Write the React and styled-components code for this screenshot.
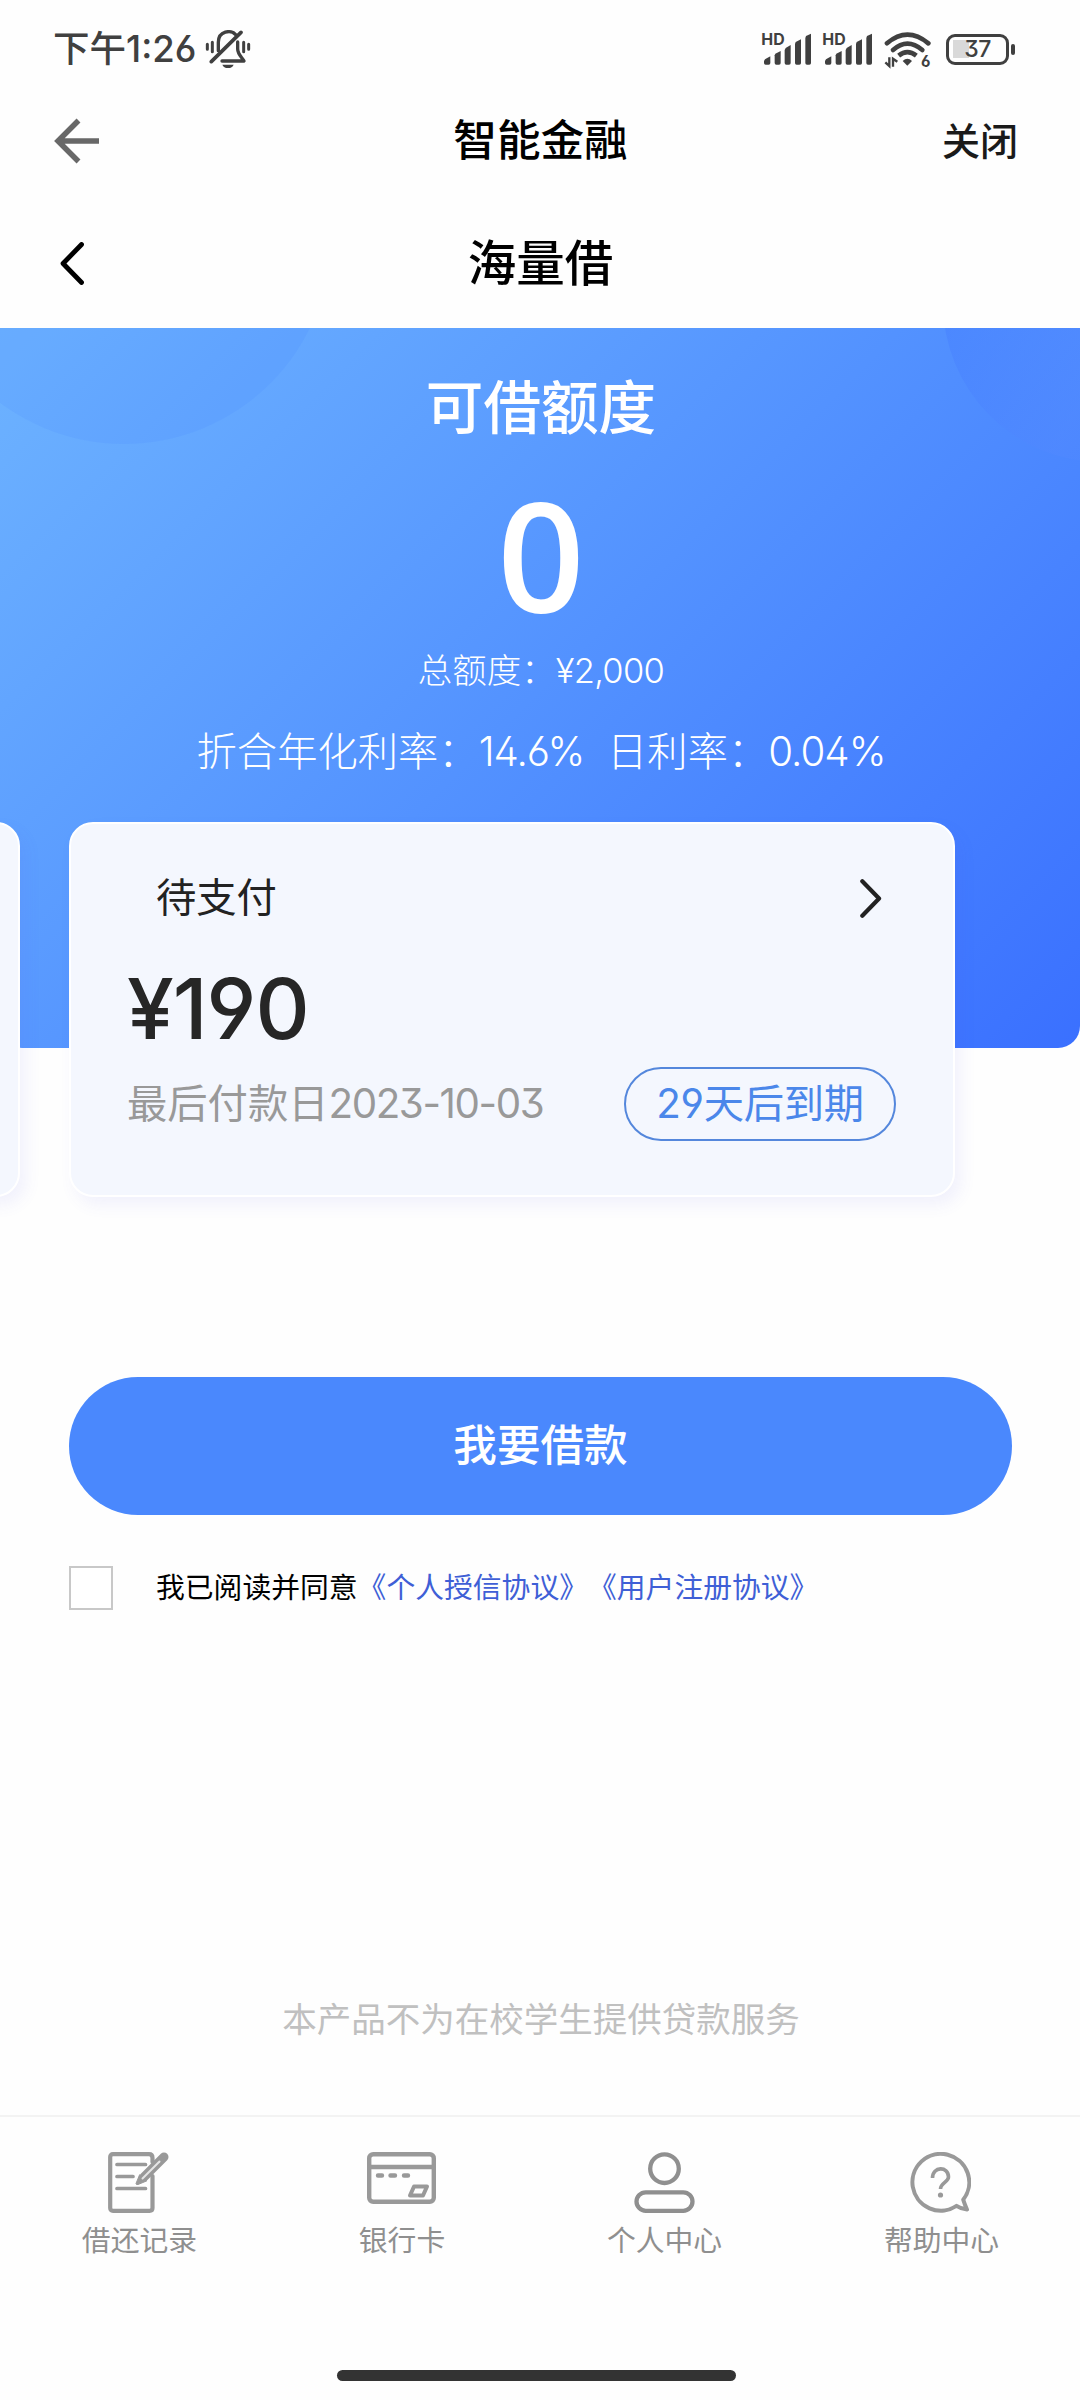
import React, { useState } from "react";
import styled, { createGlobalStyle } from "styled-components";

const GlobalStyle = createGlobalStyle`
  * {
    box-sizing: border-box;
  }
  body {
    margin: 0;
    background: #fff;
    font-family: Inter, "Noto Sans CJK SC", sans-serif;
    font-feature-settings: "ss01";
    text-spacing-trim: space-all;
    overflow-x: hidden;
  }
`;

const Page = styled.div`
  width: 1080px;
  height: 2400px;
  display: flex;
  flex-direction: column;
  overflow: hidden;
  background: #fefefe;
`;

const StatusBar = styled.div`
  height: 98px;
  display: flex;
  align-items: center;
  justify-content: space-between;
  padding: 0 65px 0 53px;
  color: #404040;
`;

const StatusGroup = styled.div`
  display: flex;
  align-items: center;
  gap: ${(props) => props.$gap || 0}px;
`;

const Clock = styled.span`
  font-size: 36.5px;
  line-height: 50px;
  font-weight: 500;
`;

const Battery = styled.div`
  position: relative;
  width: 63px;
  height: 31px;
  margin: 0 6px 0 4px;
  border: 3px solid #404040;
  border-radius: 9px;
  display: flex;
  align-items: center;
  justify-content: center;
  font-size: 23px;
  font-weight: 500;
  letter-spacing: -0.5px;
  background: linear-gradient(to right, #d9d9d9, #d9d9d9) 4px center / 16px 18px no-repeat;

  &:after {
    content: "";
    position: absolute;
    right: -9px;
    top: 7px;
    width: 4px;
    height: 11px;
    border-radius: 2px;
    background: #404040;
  }
`;

const AppHeader = styled.header`
  height: ${(props) => props.$height}px;
  display: grid;
  grid-template-columns: 200px 1fr 200px;
  align-items: center;
  padding: ${(props) => props.$top}px 62px 0 ${(props) => props.$left}px;
  color: #000;
`;

const AppTitle = styled.h1`
  margin: 0;
  padding-left: ${(props) => props.$nudge}px;
  text-align: center;
  font-weight: 500;
  font-size: ${(props) => props.$size}px;
  line-height: 60px;
`;

const CloseButton = styled.button`
  border: 0;
  padding: 0;
  background: none;
  justify-self: end;
  font: inherit;
  font-size: 38px;
  font-weight: 500;
  line-height: 58px;
  color: #1a1a1a;
`;

const Hero = styled.section`
  position: relative;
  flex: none;
  height: 720px;
  padding: 40px 0 0 2px;
  overflow: hidden;
  border-radius: 0 0 22px 22px;
  background: linear-gradient(135deg, #6db3ff 0%, #5392ff 50%, #3a70ff 100%);
  color: #fff;
  text-align: center;
`;

const Bubble = styled.i`
  position: absolute;
  left: ${(props) => props.$x}px;
  top: ${(props) => props.$y}px;
  width: ${(props) => props.$size}px;
  height: ${(props) => props.$size}px;
  border-radius: 50%;
  background: ${(props) => props.$fill};
`;

const HeroTitle = styled.div`
  font-size: 57.6px;
  line-height: 80px;
  font-weight: 500;
`;

const HeroAmount = styled.div`
  margin: -2px 0 2px;
  font-family: "Open Sans", sans-serif;
  font-size: 153px;
  line-height: 216px;
  font-weight: 600;
`;

const HeroLine = styled.div`
  font-size: ${(props) => props.$size}px;
  line-height: ${(props) => props.$height}px;
  font-weight: 300;
  white-space: pre;
`;

const Narrow = styled.span`
  letter-spacing: ${(props) => props.$by}px;
`;

const Bills = styled.section`
  position: relative;
  flex: none;
  display: flex;
  gap: 49px;
  margin: -226px 0 180px -866px;
`;

const Bill = styled.article`
  flex: none;
  width: 886px;
  height: 375px;
  padding: 42px 57px 0 56px;
  border: 2px solid #fff;
  border-radius: 24px;
  background: #f4f7fe;
  box-shadow: 6px 8px 16px rgba(90, 90, 230, 0.08);
`;

const BillHead = styled.div`
  display: flex;
  align-items: center;
  justify-content: space-between;
  height: 64px;
  padding: 0 14px 0 29px;
  font-size: 40.3px;
  line-height: 64px;
  color: #222;
`;

const BillAmount = styled.div`
  margin-top: 25px;
  font-size: 84px;
  line-height: 108px;
  font-weight: 500;
  color: #262626;
  letter-spacing: -1px;
`;

const BillFoot = styled.div`
  display: flex;
  align-items: center;
  justify-content: space-between;
  margin-top: 4px;
  font-size: 40.3px;
  line-height: 70px;
  color: #999;
`;

const DuePill = styled.span`
  width: 272px;
  height: 74px;
  border: 2px solid #5487dc;
  border-radius: 37px;
  text-align: center;
  letter-spacing: -0.3px;
  color: #4b87ea;
`;

const BorrowButton = styled.button`
  flex: none;
  width: 943px;
  height: 138px;
  margin-left: 69px;
  padding: 0;
  border: 0;
  border-radius: 69px;
  background: #4a88fd;
  color: #fff;
  font: inherit;
  font-size: 43.6px;
  font-weight: 500;
  line-height: 138px;
`;

const Agreement = styled.label`
  display: flex;
  align-items: center;
  gap: 43px;
  height: 44px;
  margin: 51px 0 0 69px;
  font-size: 28.8px;
  line-height: 42px;
  color: #000;

  a {
    color: #3f5fd6;
  }
`;

const Checkbox = styled.input`
  appearance: none;
  width: 44px;
  height: 44px;
  margin: 0;
  border: 2px solid #c8c8c8;
  background: #fff;

  &:checked {
    background: #4a88fd;
  }
`;

const Disclaimer = styled.p`
  margin: auto 0 0;
  padding-left: 2px;
  text-align: center;
  font-size: 34.5px;
  line-height: 50px;
  color: #c0c0c0;
`;

const TabBar = styled.nav`
  flex: none;
  height: 285px;
  margin-top: 70px;
  border-top: 2px solid #f3f3f3;
  display: grid;
  grid-template-rows: 1fr auto;
  justify-items: center;
`;

const Tabs = styled.div`
  width: 100%;
  display: flex;
  justify-content: space-around;
  align-items: flex-start;
  padding: 35px 0 0 1px;
`;

const Tab = styled.div`
  display: flex;
  flex-direction: column;
  align-items: center;
  font-size: 28.8px;
  line-height: 40px;
  color: #8f8f8f;

  svg {
    height: 61px;
    margin: 0 1px 8px 0;
  }
`;

const HomeBar = styled.div`
  width: 399px;
  height: 11px;
  margin: 0 7px 19px 0;
  border-radius: 6px;
  background: #333;
`;

const MutedBell = () => (
  <svg width="46" height="39" viewBox="615 91 138 117" fill="none" stroke="#404040" strokeWidth="9" strokeLinecap="round">
    <path d="M634 186 L723 98" strokeWidth="11" />
    <path d="M655 153 V128 C655 92 694 90 706 104" strokeWidth="10" />
    <path d="M713 127 V148 C713 164 727 174 732 184 H666" strokeWidth="10" strokeLinejoin="round" />
    <path d="M667 195 H701 Q697 205 684 205 Q671 205 667 195Z" fill="#404040" stroke="none" />
    <path d="M622 134 V149 M637 128 V156 M731 128 V156 M746 134 V149" strokeWidth="9" />
  </svg>
);

const Signal = () => (
  <svg width="51" height="46" viewBox="125 79 153 138" fill="#404040">
    <text x="126" y="135" fontSize="48" fontWeight="700" fontFamily="Inter" textLength="70" lengthAdjust="spacingAndGlyphs">HD</text>
    <path d="M137 179 L153 170 V190 Q153 195 148 195 H139 Q134 195 134 190 V184Z" />
    <path d="M168 162 L184 154 V190 Q184 195 179 195 H171 Q166 195 166 190 V167Z" />
    <path d="M199 145 L214 136 V190 Q214 195 209 195 H201 Q196 195 196 190 V151Z" />
    <path d="M229 127 L245 119 V190 Q245 195 240 195 H232 Q227 195 227 190 V133Z" />
    <path d="M260 109 L275 102 V190 Q275 195 270 195 H263 Q258 195 258 190 V115Z" />
  </svg>
);

const WifiSvg = styled.svg`
  margin-left: 1px;
`;

const Wifi = () => (
  <WifiSvg width="48" height="48" viewBox="493 76 144 144" fill="none" stroke="#404040">
    <path d="M502 131 Q563 79 626 131" strokeWidth="14" strokeLinecap="round" />
    <path d="M520 151 Q563 113 608 151" strokeWidth="14" strokeLinecap="round" />
    <path d="M537 168 Q563 147 590 168" strokeWidth="14" />
    <path d="M549 184 Q563 170 577 184 L563 198Z" fill="#404040" stroke="none" />
    <path d="M497 188 L509 199 V173 M520 201 V177 L533 186" strokeWidth="7" />
    <text x="604" y="201" fontSize="46" fontWeight="700" fontFamily="Inter" fill="#404040" stroke="none">6</text>
  </WifiSvg>
);

const BackArrow = () => (
  <svg width="46" height="46" viewBox="0 0 46 46" fill="none" stroke="#686868" strokeWidth="5.5">
    <path d="M24.500 2.500 L4 23 L24.500 43.500 M4 23 H45" />
  </svg>
);

const Chevron = ({ size, color, width, flip }) => (
  <svg
    width={size * 0.56}
    height={size}
    viewBox="0 0 24 43"
    fill="none"
    stroke={color}
    strokeWidth={width}
    strokeLinecap="round"
    strokeLinejoin="round"
  >
    <path d={flip ? "M2.500 2.500 L21 21.500 L2.500 40.500" : "M21.500 2.500 L3 21.500 L21.500 40.500"} />
  </svg>
);

const RecordIcon = () => (
  <svg width="61" height="61" viewBox="0 0 61 61" fill="none" stroke="#999" strokeWidth="4.2" strokeLinecap="round">
    <path d="M44.500 24 V56 Q44.500 58.800 41.500 58.800 H5 Q2.200 58.800 2.200 56 V5 Q2.200 2.200 5 2.200 H41 Q44.500 2.200 44.500 6 V10" />
    <path d="M9 12.500 H37.500 M9 24.500 H25 M9 36.500 H37.500" strokeWidth="3.700" />
    <path d="M36 25 L56 5" strokeWidth="9" />
    <path d="M31.500 23 L28 31.500 Q28 33 30 32.500 L38.500 29Z" fill="#999" strokeWidth="1" />
    <path d="M34.500 26.500 L51.500 9.500" stroke="#e6e6e6" strokeWidth="2" />
  </svg>
);

const CardIcon = () => (
  <svg width="69" height="61" viewBox="0 0 69 61" fill="none" stroke="#999" strokeWidth="4.4">
    <rect x="2.200" y="2.200" width="64.600" height="47.600" rx="4" />
    <path d="M2 15 H67" />
    <path d="M11 23.500 H15 M23.500 23.500 H28 M37 23.500 H41" strokeLinecap="round" />
    <path d="M47 34.500 H60 L56 43.500 H43Z" strokeWidth="4" strokeLinejoin="round" />
  </svg>
);

const UserIcon = () => (
  <svg width="61" height="61" viewBox="0 0 61 61" fill="none" stroke="#8f8f8f" strokeWidth="4.3">
    <circle cx="30.500" cy="16.700" r="14.300" />
    <rect x="2.500" y="40.300" width="56" height="18.500" rx="9.250" />
  </svg>
);

const HelpIcon = () => (
  <svg width="61" height="61" viewBox="0 0 61 61" fill="none" stroke="#999" strokeWidth="4" strokeLinejoin="round">
    <path d="M46.500 53.900 A28.400 28.400 0 1 1 53.200 47.700 Q54.500 52 57 57.500 Q51 57 46.500 53.900Z" />
    <path d="M22.500 26 C22.500 14 38.500 14 38.500 25 C38.500 30 30.500 31 30.500 37" strokeWidth="3.600" />
    <circle cx="30.500" cy="43" r="2.600" fill="#999" stroke="none" />
  </svg>
);

const tabs = [
  { icon: RecordIcon, label: "借还记录" },
  { icon: CardIcon, label: "银行卡" },
  { icon: UserIcon, label: "个人中心" },
  { icon: HelpIcon, label: "帮助中心" },
];

const App = () => {
  const [agreed, setAgreed] = useState(false);

  return (
    <Page>
      <GlobalStyle />
      <StatusBar>
        <StatusGroup $gap={9}>
          <Clock>下午1:26</Clock>
          <MutedBell />
        </StatusGroup>
        <StatusGroup $gap={10}>
          <Signal />
          <Signal />
          <Wifi />
          <Battery>37</Battery>
        </StatusGroup>
      </StatusBar>

      <AppHeader $height={84} $top={1} $left={54}>
        <BackArrow />
        <AppTitle $size={43.6} $nudge={9}>智能金融</AppTitle>
        <CloseButton>关闭</CloseButton>
      </AppHeader>
      <AppHeader $height={146} $top={17} $left={60}>
        <Chevron size={43} color="#000" width={4.8} />
        <AppTitle $size={48.5} $nudge={3}>海量借</AppTitle>
      </AppHeader>

      <Hero>
        <Bubble $x={-83} $y={-298} $size={414} $fill="rgba(60, 115, 255, 0.1)" />
        <Bubble
          $x={943}
          $y={-184}
          $size={318}
          $fill="linear-gradient(115deg, rgba(60, 115, 255, 0.3) 15%, rgba(100, 140, 255, 0.12) 55%)"
        />
        <HeroTitle>可借额度</HeroTitle>
        <HeroAmount>0</HeroAmount>
        <HeroLine $size={34.5} $height={14}>
          总额度：<Narrow $by={-0.7}>¥2,000</Narrow>
        </HeroLine>
        <HeroLine $size={40.3} $height={148}>
          折合年化利率：<Narrow $by={-1}>14.6%</Narrow>  日利率：<Narrow $by={-1}>0.04%</Narrow>
        </HeroLine>
      </Hero>

      <Bills>
        <Bill />
        <Bill>
          <BillHead>
            待支付
            <Chevron size={39} color="#222" width={4.6} flip />
          </BillHead>
          <BillAmount>¥190</BillAmount>
          <BillFoot>
            <span>
              最后付款日<Narrow $by={-1.4}>2023-10-03</Narrow>
            </span>
            <DuePill>29天后到期</DuePill>
          </BillFoot>
        </Bill>
      </Bills>

      <BorrowButton>我要借款</BorrowButton>
      <Agreement>
        <Checkbox type="checkbox" checked={agreed} onChange={() => setAgreed(!agreed)} />
        <span>
          我已阅读并同意<a>《个人授信协议》</a>
          <a>《用户注册协议》</a>
        </span>
      </Agreement>

      <Disclaimer>本产品不为在校学生提供贷款服务</Disclaimer>
      <TabBar>
        <Tabs>
          {tabs.map(({ icon: Icon, label }) => (
            <Tab key={label}>
              <Icon />
              {label}
            </Tab>
          ))}
        </Tabs>
        <HomeBar />
      </TabBar>
    </Page>
  );
};

export default App;
